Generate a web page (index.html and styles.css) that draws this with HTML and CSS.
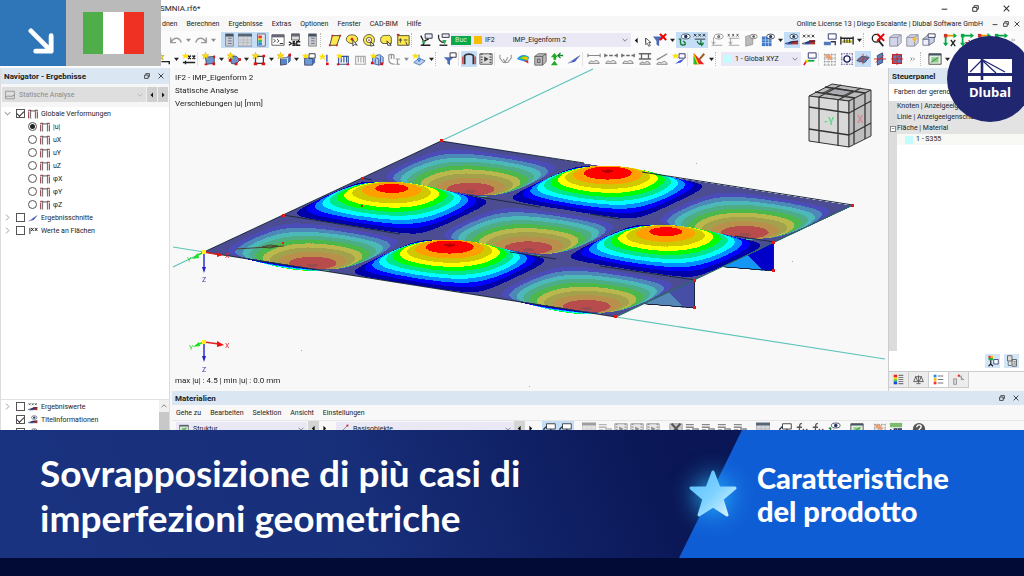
FILE: index.html
```html
<!DOCTYPE html>
<html lang="it">
<head>
<meta charset="utf-8">
<title>Sovrapposizione di più casi di imperfezioni geometriche</title>
<link rel="stylesheet" href="styles.css">
</head>
<body>
<svg class="defs" aria-hidden="true">
  <symbol id="undo" viewBox="0 0 16 16"><path d="M2 5v6h6M2.500 10.500C5 5 12 4 14 11" fill="none" stroke="#9a9a9a" stroke-width="1.600"/></symbol>
  <symbol id="redo" viewBox="0 0 16 16"><path d="M14 5v6H8M13.500 10.500C11 5 4 4 2 11" fill="none" stroke="#9a9a9a" stroke-width="1.600"/></symbol>
  <symbol id="caret" viewBox="0 0 8 16"><path d="M0 6h8l-4 5z" fill="#222"/></symbol>
  <symbol id="chev" viewBox="0 0 10 10"><path d="M1 3l4 4 4-4" fill="none" stroke="#666" stroke-width="1.300"/></symbol>
  <symbol id="more" viewBox="0 0 12 16"><path d="M1 5l3 3-3 3M6 5l3 3-3 3" fill="none" stroke="#555" stroke-width="1.300"/></symbol>
  <symbol id="left" viewBox="0 0 8 16"><path d="M6 3v10L1 8z" fill="#111"/></symbol>
  <symbol id="right" viewBox="0 0 8 16"><path d="M2 3v10l5-5z" fill="#111"/></symbol>
  <symbol id="panel" viewBox="0 0 16 16"><path d="M4 1h9v14H4z" fill="#c9ccd0" stroke="#888"/><path d="M4 1h9v3H4z" fill="#456"/><path d="M7 6h4M7 9h4M7 12h4" stroke="#668"/></symbol>
  <symbol id="table" viewBox="0 0 16 16"><path d="M0 1h16v14H0z" fill="#d4d6da" stroke="#889"/><path d="M0 1h16v3H0z" fill="#567"/><path d="M1 8h14M1 11h14M6 5v9M10.500 5v9" stroke="#b4bac2"/></symbol>
  <symbol id="colors" viewBox="0 0 16 16"><path d="M4 1h9v14H4z" fill="#dfe4ea" stroke="#667"/><path d="M5 3h4v3H5z" fill="#e33"/><path d="M5 6h4v2H5z" fill="#ec0"/><path d="M5 8h4v3H5z" fill="#3b5"/><path d="M5 11h4v3H5z" fill="#28e"/></symbol>
  <symbol id="console" viewBox="0 0 16 16"><path d="M1 2h14v12H1z" fill="#fff" stroke="#555"/><path d="M1 2h14v3H1z" fill="#667"/><path d="M3 7l2 2-2 2M7 7l2 2-2 2M10 12h4" fill="none" stroke="#222"/></symbol>
  <symbol id="script" viewBox="0 0 16 16"><path d="M4 1h9v7H4z" fill="#ddd" stroke="#555"/><path d="M4 1h9v3H4z" fill="#667"/><path d="M1 10l3 2-3 2M8 10H6v2h2v2H5M14 10h-4v4h4M12 8v2" fill="none" stroke="#222" stroke-width="1.500"/></symbol>
  <symbol id="poly" viewBox="0 0 16 16"><path d="M5 3h9l-4 11H2z" fill="#ffe94a" stroke="#333"/><path d="M4 2h2v2H4zM13 2h2v2h-2zM1 13h2v2H1zM9 13h2v2H9z" fill="#c22"/></symbol>
  <symbol id="ellip" viewBox="0 0 16 16"><ellipse cx="8" cy="7" rx="6.500" ry="5" fill="#ffe94a" stroke="#554" /><circle cx="8" cy="7" r="1.500" fill="#c22"/><path d="M9 8v7l2-2 3 1z" fill="#fff" stroke="#333"/></symbol>
  <symbol id="ring" viewBox="0 0 16 16"><circle cx="8" cy="8" r="6.300" fill="#ffe94a" stroke="#554"/><circle cx="8" cy="8" r="3" fill="#fff" stroke="#554"/><circle cx="8" cy="8" r="1" fill="#c22"/><path d="M10 10v5l4-1z" fill="#fff" stroke="#333"/></symbol>
  <symbol id="lasso" viewBox="0 0 16 16"><path d="M2 9c-1-5 3-7 7-6 3-1 5 0 5 4v5H6c-2 0-4-1-4-3z" fill="#ffe94a" stroke="#443"/><path d="M9 9l5 5h-4z" fill="#fff" stroke="#333"/></symbol>
  <symbol id="boxsel" viewBox="0 0 16 16"><path d="M2 3h13v11H2z" fill="#ffe94a" stroke="#443"/><path d="M5 6v5M3 8h4M9 8h4M11 10l2 4" stroke="#333"/><path d="M1 1h3v2H1z" fill="#c22"/></symbol>
  <symbol id="load" viewBox="0 0 16 16"><path d="M7 1h8v5H7z" fill="#e8edf6" stroke="#223"/><path d="M2 3l3 6M5 9v5M11 7l-5 2M2 14h11" stroke="#222" stroke-width="1.500"/><path d="M3 9h5l-2 4z" fill="#3a5"/></symbol>
  <symbol id="load2" viewBox="0 0 16 16"><path d="M7 1h8v4H7z" fill="#e8edf6" stroke="#223"/><path d="M3 2c-1 5 2 9 7 9M4 14h9" fill="none" stroke="#333" stroke-width="1.500"/><path d="M7 8h5l-2 5z" fill="#3a5"/></symbol>
  <symbol id="filterx" viewBox="0 0 16 16"><path d="M0 4h11l-4 5v6l-3-2V9z" fill="#4a6cb8"/><path d="M8 1l7 7M15 1L8 8" stroke="#e00" stroke-width="2.400"/></symbol>
  <symbol id="filter" viewBox="0 0 16 16"><path d="M1 6h11L8 10v5l-3-2v-3z" fill="#4a6cb8"/><path d="M8 1h7v5H8z" fill="#fff" stroke="#223"/></symbol>
  <symbol id="eyeload" viewBox="0 0 16 16"><ellipse cx="10" cy="4" rx="5" ry="2.800" fill="#fff" stroke="#345"/><circle cx="10" cy="4" r="2" fill="#236"/><path d="M2 7h3M4 7v4c0 3 4 4 6 1M7 9l3 3" fill="none" stroke="#173" stroke-width="1.600"/></symbol>
  <symbol id="xxx" viewBox="0 0 16 16"><path d="M1 1l3 3M4 1L1 4M6 1l3 3M9 1L6 4M11 1l3 3M14 1l-3 3M2 7h12" stroke="#222"/><path d="M5 9c0 4 4 5 7 3M9 8v5M8 11l2 3 2-3" fill="none" stroke="#173" stroke-width="1.500"/></symbol>
  <symbol id="eyegray" viewBox="0 0 16 16"><ellipse cx="10" cy="4" rx="5" ry="2.800" fill="#fff" stroke="#888"/><circle cx="10" cy="4" r="1.800" fill="#777"/><path d="M4 5v8M2 10l2 3 2-3M2 14h12" fill="none" stroke="#999"/></symbol>
  <symbol id="xgray" viewBox="0 0 16 16"><path d="M1 1l2 3M3 1L1 4M6 1l2 3M8 1L6 4M11 1l2 3M13 1l-2 3" stroke="#555"/><path d="M4 6v7M2 10l2 3 2-3M2 14h12M2 6h12" fill="none" stroke="#999"/></symbol>
  <symbol id="boxeye" viewBox="0 0 16 16"><path d="M2 4l8-2v11l-8 2z" fill="#bbb" stroke="#999"/><ellipse cx="11" cy="4" rx="4" ry="2.500" fill="#fff" stroke="#777"/><circle cx="11" cy="4" r="1.500" fill="#555"/></symbol>
  <symbol id="grideye" viewBox="0 0 16 16"><path d="M1 4h11v11H1z" fill="#3f78c4"/><path d="M1 8h11M1 11h11M5 4v11M8.500 4v11" stroke="#cfe0f6" stroke-width=".7"/><ellipse cx="11" cy="4" rx="4.500" ry="2.800" fill="#fff" stroke="#345"/><circle cx="11" cy="4" r="1.800" fill="#236"/></symbol>
  <symbol id="flageye" viewBox="0 0 16 16"><ellipse cx="10" cy="4" rx="4.500" ry="2.800" fill="#fff" stroke="#345"/><circle cx="10" cy="4" r="1.800" fill="#236"/><path d="M8 9h7v4H8z" fill="#a33"/><path d="M0 13c4 0 4-4 8-4v4z" fill="#35a"/><path d="M0 12L15 9" stroke="#224"/></symbol>
  <symbol id="flagx" viewBox="0 0 16 16"><path d="M1 2l3 3M4 2L1 5M6 2l3 3M9 2L6 5M11 2l3 3M14 2l-3 3" stroke="#222"/><path d="M8 8h7v5H8z" fill="#a33"/><path d="M0 13c4 0 4-4 8-4v4z" fill="#35a"/><path d="M0 12L15 9" stroke="#224"/></symbol>
  <symbol id="wincurve" viewBox="0 0 16 16"><path d="M6 1h9v6H6z" fill="#fff" stroke="#226"/><path d="M1 10h8v4H1z" fill="#57b"/><path d="M9 10h5v4" fill="none" stroke="#335" stroke-width="1.500"/></symbol>
  <symbol id="winlink" viewBox="0 0 16 16"><path d="M4 2h10v6H4z" fill="#fff" stroke="#333"/><path d="M4 5l-3 3v6M9 8v4h5" fill="none" stroke="#235" stroke-width="1.500"/></symbol>
  <symbol id="ruler" viewBox="0 0 16 16"><path d="M1 4v9M15 4v9M1 6h14M3 10h10" stroke="#222" stroke-width="1.500"/><path d="M3 8h10v3H3z" fill="#cc3"/><path d="M5 6v5M8 6v5M11 6v5" stroke="#222"/></symbol>
  <symbol id="zoomx" viewBox="0 0 16 16"><circle cx="6" cy="6" r="4.500" fill="#fff" stroke="#222" stroke-width="1.500"/><path d="M9 9l5 6" stroke="#222" stroke-width="2"/><path d="M7 1l8 8M15 1L7 9" stroke="#e00" stroke-width="2.400"/></symbol>
  <symbol id="cube" viewBox="0 0 16 16"><path d="M2 5l4-3h9v9l-4 4H2zM2 5h9v10M11 5l4-3" fill="#d3d6ea" stroke="#889"/></symbol>
  <symbol id="cubey" viewBox="0 0 16 16"><path d="M2 5l4-3h9v9l-4 4H2zM2 5h9v10M11 5l4-3" fill="#d3d6ea" stroke="#889"/><path d="M12 3L8 8h3l-2 5 5-7h-3z" fill="#fb2"/></symbol>
  <symbol id="cubes" viewBox="0 0 16 16"><path d="M1 7h7v7H1z" fill="#eef" stroke="#778"/><path d="M1 7l5-4h8v7l-6 4V7z" fill="#c4d0ee" stroke="#667"/><path d="M7 1h8v4H7z" fill="#fff" stroke="#335"/></symbol>
  <symbol id="axes" viewBox="0 0 16 16"><path d="M3 3v11" stroke="#0a4" stroke-width="2"/><path d="M3 3h11" stroke="#e90" stroke-width="2"/><path d="M1 1h4v4H1z" fill="#c33"/><path d="M0 11h6l-3 4zM12 0v6l4-3z" fill="#0a4"/><path d="M9 8l5 7M14 8l-5 7" stroke="#222" stroke-width="1.500"/></symbol>
  <symbol id="axes2" viewBox="0 0 16 16"><path d="M3 3v11M3 3h11" stroke="#0a4" stroke-width="2"/><path d="M1 1h4v4H1z" fill="#0a4"/><path d="M0 11h6l-3 4zM12 0v6l4-3z" fill="#0a4"/><path d="M6 11h3M10 8l4 7M14 8l-4 7" stroke="#c33" stroke-width="1.500"/></symbol>
  <symbol id="line" viewBox="0 0 16 16"><path d="M4 1l1 3 3 0-2 2 1 3-3-2-3 1 1-3-2-2h3z" fill="#ffe000" stroke="#997a00" stroke-width=".5"/><path d="M5 11h9v3" fill="none" stroke="#222" stroke-width="1.600"/></symbol>
  <symbol id="starxx" viewBox="0 0 16 16"><path d="M7 4l3 4M10 4L7 8M12 4l3 4M15 4l-3 4M1 12h14M4 10v4" stroke="#222" stroke-width="1.500"/><path d="M4 0l1 3h3L6 5l1 3-3-2-3 2 1-3-2-2h3z" fill="#ffe000"/></symbol>
  <symbol id="newmember" viewBox="0 0 16 16"><path d="M4 6l10-1v8l-9 1z" fill="#6c95cf" stroke="#446"/><path d="M13 4h2v3h-2zM3 13h3v2H3zM12 12h3v3h-3z" fill="#d11"/><path d="M4 0l1 3h3L6 5l1 3-3-2-3 2 1-3-2-2h3z" fill="#ffe000" stroke="#b90" stroke-width=".4"/></symbol>
  <symbol id="newsurf" viewBox="0 0 16 16"><path d="M4 7c2-3 6-3 8-1l3 3-5 5-5-1z" fill="#6c95cf" stroke="#446"/><path d="M2 8h3v3H2zM9 12h3v3H9zM13 7h3v3h-3z" fill="#d11"/><path d="M4 0l1 3h3L6 5l1 3-3-2-3 2 1-3-2-2h3z" fill="#ffe000" stroke="#b90" stroke-width=".4"/></symbol>
  <symbol id="newopen" viewBox="0 0 16 16"><path d="M4 5h9v8H4z" fill="#fff" stroke="#345" stroke-width="1.500"/><path d="M2 12h4v3H2zM11 12h4v3h-4zM12 3h3v3h-3z" fill="#d11"/><path d="M4 0l1 3h3L6 5l1 3-3-2-3 2 1-3-2-2h3z" fill="#ffe000" stroke="#b90" stroke-width=".4"/></symbol>
  <symbol id="newsolid" viewBox="0 0 16 16"><path d="M4 7l8-1 3-4v8l-4 4-7 1z" fill="#5b86c5" stroke="#446"/><path d="M4 7h8v7" fill="none" stroke="#def"/><path d="M13 2h3v3h-3z" fill="#d11"/><path d="M4 0l1 3h3L6 5l1 3-3-2-3 2 1-3-2-2h3z" fill="#ffe000" stroke="#b90" stroke-width=".4"/></symbol>
  <symbol id="newbox" viewBox="0 0 16 16"><path d="M3 7h9v8H3z" fill="#6b9ad8" stroke="#446"/><path d="M8 2h7v5H8z" fill="#fff" stroke="#223"/><path d="M12 7h3v5l-3 3z" fill="#4a74b4"/><path d="M4 1l1 2h3L6 5l1 3-3-2-3 2 1-3-2-2h3z" fill="#ffe000"/></symbol>
  <symbol id="node" viewBox="0 0 16 16"><path d="M9 3v8" stroke="#35c" stroke-width="1.600"/><path d="M8 12h3v3H8z" fill="#d11"/><path d="M4 1l1 3h3L6 6l1 3-3-2-3 2 1-3-2-2h3z" fill="#ffe000"/></symbol>
  <symbol id="frame" viewBox="0 0 16 16"><path d="M3 14V5h11v9M6 5v7M9 5v7M12 5v7M2 14h13" fill="none" stroke="#359" stroke-width="1.300"/><path d="M1 13h3v2H1zM12 13h3v2h-3z" fill="#d11"/><path d="M4 1l1 2h3L6 5l1 3-3-2-3 2 1-3-2-2h3z" fill="#ffe000"/></symbol>
  <symbol id="framegray" viewBox="0 0 16 16"><path d="M3 14V5h11v9M6 5v7M9 5v7M12 5v7M2 14h13" fill="none" stroke="#aaa" stroke-width="1.300"/></symbol>
  <symbol id="framebox" viewBox="0 0 16 16"><path d="M3 5l8-2 4 3v7l-5 2-7-2zM3 5l7 3v7M6 5v8M12 5v9" fill="#b9cdf0" stroke="#359"/><path d="M1 11h3v3H1zM12 12h3v3h-3z" fill="#d11"/><path d="M4 0l1 3h3L6 5l1 3-3-2-3 2 1-3-2-2h3z" fill="#ffe000"/></symbol>
  <symbol id="spring" viewBox="0 0 16 16"><path d="M2 3v5c0 4 3 6 7 6M5 2v6M8 3v5M2 3h6M10 8h5M12 8v6M10 14h5" fill="none" stroke="#999" stroke-width="1.400"/></symbol>
  <symbol id="plane" viewBox="0 0 16 16"><path d="M2 12l6-5 7 3-6 5z" fill="#b9cdf0" stroke="#57a"/><path d="M8 3v7M6 8l2 3 2-3" fill="none" stroke="#27c"/><path d="M4 1l1 2h3L6 5l1 3-3-2-3 2 1-3-2-2h3z" fill="#ffe000"/></symbol>
  <symbol id="portal" viewBox="0 0 16 16"><path d="M3 14V4c2-2 8-2 10 0v10" fill="none" stroke="#333" stroke-width="2"/><path d="M1 14V5M15 14V5" stroke="#c22" stroke-width="1.300"/></symbol>
  <symbol id="film" viewBox="0 0 16 16"><path d="M1 2h14v12H1z" fill="#ddd" stroke="#555"/><path d="M3 2v12M13 2v12" stroke="#555" stroke-dasharray="1.500 1.500" stroke-width="2"/><path d="M6 5v6l5-3z" fill="#444"/></symbol>
  <symbol id="vgray" viewBox="0 0 16 16"><path d="M1 3v4l4 5h5l4-5V3M5 8l2 4 3-6" fill="none" stroke="#999" stroke-width="1.300"/></symbol>
  <symbol id="rainbow" viewBox="0 0 16 16"><path d="M1 8c4-5 9-6 14-2l-2 6c-4-2-8-2-12-4z" fill="#1a8cf0"/><path d="M3 8c4-4 8-4 11-2l-1 4c-4-2-7-1-10-2z" fill="#3d3"/><path d="M6 7c3-2 6-2 8 0l-1 2z" fill="#fb0"/><path d="M9 10h5v3z" fill="#e22"/></symbol>
  <symbol id="graybox" viewBox="0 0 16 16"><path d="M2 5l4-3h9v9l-4 4H2z" fill="#bbb" stroke="#666"/><path d="M2 5h9v10M11 5l4-3M5 8h3v4H5z" fill="none" stroke="#555"/></symbol>
  <symbol id="react" viewBox="0 0 16 16"><path d="M4 9V3h3v6" fill="#2a2"/><path d="M1 6l4-5 4 5zM1 15l4-5 4 5z" fill="#2a2"/><path d="M15 4H9M12 1L9 4l3 3" fill="none" stroke="#183" stroke-width="1.500"/></symbol>
  <symbol id="blade" viewBox="0 0 16 16"><path d="M1 13c5-1 5-5 14-9L9 11z" fill="#3d55d8"/><path d="M1 13L15 4" stroke="#88a"/></symbol>
  <symbol id="dim" viewBox="0 0 16 16"><path d="M1 4h14M1 2v4M15 2v4" stroke="#888" stroke-width="1.300"/><path d="M2 13c2-5 5-1 6-2s4-3 6 2z" fill="#eee" stroke="#777"/></symbol>
  <symbol id="dimx" viewBox="0 0 16 16"><path d="M1 4h3M6 4h4M12 4h3M1 2v4M15 2v4" stroke="#666" stroke-width="1.500"/><path d="M2 13c2-5 5-1 6-2s4-3 6 2z" fill="#eee" stroke="#777"/></symbol>
  <symbol id="dimt" viewBox="0 0 16 16"><path d="M1 2h14M4 2v6M12 2v6M1 8h14" stroke="#666" stroke-width="1.500"/><path d="M2 14c2-5 5-1 6-2s4-3 6 2z" fill="#ddd" stroke="#777"/></symbol>
  <symbol id="dimd" viewBox="0 0 16 16"><path d="M2 9l12-7" stroke="#888" stroke-width="1.500"/><path d="M2 14c2-4 5-1 6-2s4-3 6 2z" fill="#eee" stroke="#777"/></symbol>
  <symbol id="newres" viewBox="0 0 16 16"><path d="M8 2h7v5H8z" fill="#fff" stroke="#226"/><path d="M1 14c5 0 5-5 13-6l-4 4z" fill="#3d55d8"/><path d="M4 1l1 2h3L6 5l1 3-3-2-3 2 1-3-2-2h3z" fill="#ffe000"/></symbol>
  <symbol id="pencilmap" viewBox="0 0 16 16"><path d="M2 1v13h12z" fill="#e22"/><path d="M2 1l6 13H2z" fill="#fc0"/><path d="M2 4l4 10H2z" fill="#2b3"/><path d="M8 9l6-7" stroke="#963" stroke-width="2.400"/></symbol>
  <symbol id="cs" viewBox="0 0 16 16"><path d="M6 1h9v6H6z" fill="#fff" stroke="#226"/><path d="M4 10h9" stroke="#0a4" stroke-width="2"/><path d="M4 10l-3 5" stroke="#d22" stroke-width="2"/><path d="M3 9h3v3H3z" fill="#fc0"/></symbol>
  <symbol id="snap" viewBox="0 0 16 16"><path d="M2 2v13M6 2v13M10 2v13M14 2v13M1 3h14M1 7h14M1 11h14M1 15h14" stroke="#777" stroke-dasharray="1 1"/><path d="M2 2l7 2 2 4-3 1-5-3z" fill="#eaa070"/></symbol>
  <symbol id="snap2" viewBox="0 0 16 16"><path d="M2 2v13M14 2v13M1 2h14M1 14h14M8 1v15M1 8h14" stroke="#669" stroke-dasharray="2 1"/><circle cx="8" cy="8" r="3.500" fill="#fff" stroke="#226" stroke-width="1.500"/></symbol>
  <symbol id="wp" viewBox="0 0 16 16"><path d="M1 10l5-5 9 1-5 6z" fill="#5b80c0" stroke="#346"/><path d="M8 2v12M2 8h12M4 12l8-8" stroke="#a44"/></symbol>
  <symbol id="wp2" viewBox="0 0 16 16"><path d="M5 4l6-3v11l-6 3z" fill="#5b80c0" stroke="#346"/><path d="M1 8h14M3 12l9-8" stroke="#c22"/></symbol>
  <symbol id="wp3" viewBox="0 0 16 16"><path d="M3 3h10v10H3z" fill="#5b80c0" stroke="#c22" stroke-width="1.500"/><path d="M1 8h14M8 1v14M4 12l8-8" stroke="#c22"/></symbol>
  <symbol id="greenwin" viewBox="0 0 16 16"><path d="M1 2h14v12H1z" fill="#e6efe6" stroke="#444"/><path d="M1 2h14v2H1z" fill="#456"/><path d="M4 6h8v6H4z" fill="#8c8"/><path d="M3 12l9-6" stroke="#383"/></symbol>
  <symbol id="disp" viewBox="0 0 16 16"><path d="M4 15V3h8v12" fill="none" stroke="#777" stroke-width="2"/><path d="M1 15V5M1 4V2h4M11 2h4v2M15 15V5" fill="none" stroke="#8a2a34" stroke-width="1.500"/></symbol>
  <symbol id="values" viewBox="0 0 16 16"><path d="M5 3l4 5M9 3L5 8M11 3l4 5M15 3l-4 5M3 3v10" stroke="#222" stroke-width="1.500"/></symbol>
  <symbol id="restore" viewBox="0 0 10 10"><path d="M3 3V1h6v5H7M1 3.500h6V9H1z" fill="none" stroke="#333" stroke-width="1.400"/></symbol>
  <symbol id="close" viewBox="0 0 10 10"><path d="M1 1l8 8M9 1L1 9" stroke="#333" stroke-width="1.500"/></symbol>
  <symbol id="min" viewBox="0 0 10 10"><path d="M1 6h8" stroke="#333" stroke-width="1.500"/></symbol>
  <symbol id="scales" viewBox="0 0 16 16"><path d="M8 2v11M3 4h10M4 4l-3 7h6zM12 4l-3 7h6zM5 14h6" fill="none" stroke="#555" stroke-width="1.300"/></symbol>
  <symbol id="list" viewBox="0 0 16 16"><path d="M1 1h4v4H1z" fill="#28e"/><path d="M1 6h4v4H1z" fill="#fb0"/><path d="M1 11h4v4H1z" fill="#e33"/><path d="M7 3h8M7 8h8M7 13h8" stroke="#777" stroke-width="1.500"/></symbol>
  <symbol id="scale" viewBox="0 0 16 16"><path d="M1 1h5v4H1z" fill="#e22"/><path d="M1 5h5v3H1z" fill="#fc0"/><path d="M1 8h5v3H1z" fill="#3c4"/><path d="M1 11h5v4H1z" fill="#24d"/><path d="M8 2h7M8 5h7M8 8h7M8 11h7M8 14h7" stroke="#777" stroke-width="1.500"/></symbol>
  <symbol id="factor" viewBox="0 0 16 16"><path d="M1 7h4v8H1z" fill="#ddd" stroke="#777"/><path d="M7 1h3v3H7z" fill="#d22"/><path d="M10 3l5 5M12 2v6h4" fill="none" stroke="#777"/></symbol>
  <symbol id="person" viewBox="0 0 16 16"><path d="M2 1h3v3H2z" fill="#e22"/><path d="M5 1h3v3H5z" fill="#fb0"/><path d="M2 4h6v3H2z" fill="#2a4"/><path d="M5 7v5l-3 3M5 12l3 3" stroke="#222" stroke-width="1.600" fill="none"/><path d="M9 6h6v6H9z" fill="#fff" stroke="#226"/></symbol>
  <symbol id="copy" viewBox="0 0 16 16"><path d="M2 1h6v7H2zM8 6h6v9H8z" fill="#ddd" stroke="#666" stroke-width="1.300"/><path d="M3 9v5h4M10 9h3M10 12h3" fill="none" stroke="#555"/></symbol>
  <symbol id="help" viewBox="0 0 16 16"><circle cx="8" cy="8" r="7" fill="#555"/><path d="M5.500 6c0-4 5-3 5-.500 0 2-2.500 2-2.500 4M8 11v2" fill="none" stroke="#fff" stroke-width="1.600"/></symbol>
  <symbol id="calc" viewBox="0 0 16 16"><path d="M1 1h14v5H1z" fill="#7cbb70"/><path d="M2 8v6M6 8h3v6H6zM11 8h3v6h-3z" fill="none" stroke="#235" stroke-width="1.500"/></symbol>
  <symbol id="fx" viewBox="0 0 16 16"><path d="M8 2c-3-1-3 2-3 12M2 6h6M9 8l5 6M14 8l-5 6" fill="none" stroke="#555" stroke-width="1.500"/></symbol>
  <symbol id="rows" viewBox="0 0 16 16"><path d="M1 3h9M1 6h9M1 9h5M8 8h7v4M12 12l3 2" fill="none" stroke="#888" stroke-width="1.600"/></symbol>
  <symbol id="delx" viewBox="0 0 16 16"><path d="M1 2h14v13H1z" fill="#ccc" stroke="#999"/><path d="M3 2l10 11M13 2L3 13" stroke="#555" stroke-width="2.400"/></symbol>
</svg>

<main class="stage">
  <section class="app">
    <header class="titlebar">
      <span class="file">SMNIA.rf6*</span>
      <div class="win-buttons">
        <button aria-label="Minimieren"><svg><use href="#min"/></svg></button>
        <button aria-label="Wiederherstellen"><svg><use href="#restore"/></svg></button>
        <button aria-label="Schließen"><svg><use href="#close"/></svg></button>
      </div>
    </header>
    <nav class="menubar">
      <a href="#">dnen</a><a href="#">Berechnen</a><a href="#">Ergebnisse</a><a href="#">Extras</a><a href="#">Optionen</a><a href="#">Fenster</a><a href="#">CAD-BIM</a><a href="#">Hilfe</a>
      <span class="license">Online License 13 | Diego Escalante | Dlubal Software GmbH</span>
      <div class="mini"><svg><use href="#min"/></svg><svg><use href="#restore"/></svg><svg><use href="#close"/></svg></div>
    </nav>

    <div class="toolbar first">
      <button aria-label="Rückgängig"><svg><use href="#undo"/></svg></button><button class="drop dim" aria-label="Liste"><svg><use href="#caret"/></svg></button>
      <button aria-label="Wiederholen"><svg><use href="#redo"/></svg></button><button class="drop dim" aria-label="Liste"><svg><use href="#caret"/></svg></button>
      <i class="sep"></i>
      <div class="on"><button aria-label="Navigator"><svg><use href="#panel"/></svg></button><button aria-label="Tabellen"><svg><use href="#table"/></svg></button><button aria-label="Panel"><svg><use href="#colors"/></svg></button></div>
      <button aria-label="Konsole"><svg><use href="#console"/></svg></button><button aria-label="Skript"><svg><use href="#script"/></svg></button><button aria-label="Manager"><svg><use href="#panel"/></svg></button>
      <i class="sep dots"></i>
      <button aria-label="Auswahl 1"><svg><use href="#poly"/></svg></button><button aria-label="Auswahl 2"><svg><use href="#ellip"/></svg></button><button aria-label="Auswahl 3"><svg><use href="#ring"/></svg></button><button aria-label="Auswahl 4"><svg><use href="#lasso"/></svg></button><button aria-label="Auswahl 5"><svg><use href="#boxsel"/></svg></button>
      <i class="sep dots"></i>
      <button aria-label="Lastfälle"><svg><use href="#load"/></svg></button><button aria-label="Lasten"><svg><use href="#load2"/></svg></button>
      <div class="combo case"><b class="tag">Buc</b><i class="swatch"></i><label for="case">IF2</label><select id="case"><option>IMP_Eigenform 2</option></select><svg class="chev"><use href="#chev"/></svg></div>
      <button class="step" aria-label="Zurück"><svg><use href="#left"/></svg></button><button class="step" aria-label="Weiter"><svg><use href="#right"/></svg><svg class="cursor" viewBox="0 0 8 12"><path d="M1 0v9l2-2 2 4 2-1-2-4h3z" fill="#fff" stroke="#333"/></svg></button>
      <button aria-label="Filter aus"><svg><use href="#filterx"/></svg></button><button class="drop" aria-label="Liste"><svg><use href="#caret"/></svg></button>
      <div class="on"><button aria-label="Lasten zeigen"><svg><use href="#eyeload"/></svg></button><button aria-label="Lastwerte"><svg><use href="#xxx"/></svg></button></div>
      <button aria-label="Lager zeigen"><svg><use href="#eyegray"/></svg></button><button aria-label="Lagerwerte"><svg><use href="#xgray"/></svg></button><button aria-label="Objekte"><svg><use href="#boxeye"/></svg></button><button aria-label="Netz"><svg><use href="#grideye"/></svg></button><button class="drop" aria-label="Liste"><svg><use href="#caret"/></svg></button>
      <div class="on"><button aria-label="Ergebnisse zeigen"><svg><use href="#flageye"/></svg></button></div>
      <button aria-label="Ergebniswerte"><svg><use href="#flagx"/></svg></button>
      <i class="sep"></i>
      <button aria-label="Verlauf"><svg><use href="#wincurve"/></svg></button><button aria-label="Bemaßung"><svg><use href="#ruler"/></svg></button><button class="drop" aria-label="Liste"><svg><use href="#caret"/></svg></button>
      <i class="sep dots"></i>
      <button aria-label="Zoom"><svg><use href="#zoomx"/></svg></button><button aria-label="Ansicht"><svg><use href="#cube"/></svg></button><button aria-label="Schnellansicht"><svg><use href="#cubey"/></svg></button><button aria-label="Körper"><svg><use href="#cubes"/></svg></button>
      <i class="sep"></i>
      <button aria-label="In X"><svg><use href="#axes"/></svg></button><button aria-label="In -X"><svg><use href="#axes2"/></svg></button><button aria-label="In Y"><svg><use href="#axes"/></svg></button><button aria-label="In Z"><svg><use href="#axes2"/></svg></button><button class="drop" aria-label="Mehr"><svg><use href="#more"/></svg></button>
    </div>

    <div class="toolbar second">
      <button aria-label="Neue Linie"><svg><use href="#line"/></svg></button><button class="drop" aria-label="Liste"><svg><use href="#caret"/></svg></button><button aria-label="Bemaßung neu"><svg><use href="#starxx"/></svg></button>
      <i class="sep thin"></i>
      <button aria-label="Neuer Stab"><svg><use href="#newmember"/></svg></button><button class="drop" aria-label="Liste"><svg><use href="#caret"/></svg></button><button aria-label="Neue Fläche"><svg><use href="#newsurf"/></svg></button><button class="drop" aria-label="Liste"><svg><use href="#caret"/></svg></button><button aria-label="Neue Öffnung"><svg><use href="#newopen"/></svg></button><button class="drop" aria-label="Liste"><svg><use href="#caret"/></svg></button><button aria-label="Neuer Körper"><svg><use href="#newsolid"/></svg></button><button class="drop" aria-label="Liste"><svg><use href="#caret"/></svg></button><button aria-label="Neuer Block"><svg><use href="#newbox"/></svg></button>
      <button aria-label="Knotenlast"><svg><use href="#node"/></svg></button><button aria-label="Stablast"><svg><use href="#frame"/></svg></button><button aria-label="Linienlast"><svg><use href="#framegray"/></svg></button><button aria-label="Flächenlast"><svg><use href="#framebox"/></svg></button><button aria-label="Feder"><svg><use href="#spring"/></svg></button><button class="drop dim" aria-label="Liste"><svg><use href="#caret"/></svg></button><button aria-label="Freie Last"><svg><use href="#plane"/></svg></button><button class="drop" aria-label="Liste"><svg><use href="#caret"/></svg></button>
      <i class="sep dots"></i>
      <button aria-label="Filter"><svg><use href="#filter"/></svg></button>
      <i class="sep thin"></i>
      <div class="on"><button aria-label="Verformung"><svg><use href="#portal"/></svg></button></div><button aria-label="Animation"><svg><use href="#film"/></svg></button>
      <i class="sep thin"></i>
      <button aria-label="Stäbe"><svg><use href="#vgray"/></svg></button><button aria-label="Flächen"><svg><use href="#rainbow"/></svg></button><button aria-label="Volumen"><svg><use href="#graybox"/></svg></button><button aria-label="Reaktionen"><svg><use href="#react"/></svg></button><button aria-label="Schnitte"><svg><use href="#blade"/></svg></button>
      <i class="sep thin"></i>
      <button aria-label="Maß 1"><svg><use href="#dim"/></svg></button><button aria-label="Maß 2"><svg><use href="#dimx"/></svg></button><button aria-label="Maß 3"><svg><use href="#dimx"/></svg></button><button aria-label="Maß 4"><svg><use href="#dimt"/></svg></button><button aria-label="Maß 5"><svg><use href="#dimd"/></svg></button><button aria-label="Neues Ergebnis"><svg><use href="#newres"/></svg></button>
      <i class="sep thin"></i>
      <button aria-label="Farben"><svg><use href="#pencilmap"/></svg></button><button class="drop" aria-label="Liste"><svg><use href="#caret"/></svg></button>
      <i class="sep dots"></i>
      <div class="combo axes"><i class="swatch pale"></i><select aria-label="Koordinatensystem"><option>1 - Global XYZ</option></select><svg class="chev"><use href="#chev"/></svg></div>
      <button aria-label="Koordinaten"><svg><use href="#cs"/></svg></button>
      <i class="sep thin"></i>
      <button aria-label="Raster"><svg><use href="#snap"/></svg></button><button aria-label="Fang"><svg><use href="#snap2"/></svg></button><div class="on"><button aria-label="Ebene XY"><svg><use href="#wp"/></svg></button></div><button aria-label="Ebene YZ"><svg><use href="#wp2"/></svg></button><button aria-label="Ebene XZ"><svg><use href="#wp3"/></svg></button><button aria-label="Mehr" class="wide"><svg><use href="#more"/></svg></button>
      <i class="sep dots"></i>
      <button aria-label="Fenster"><svg><use href="#greenwin"/></svg></button><button class="drop" aria-label="Liste"><svg><use href="#caret"/></svg></button><button class="drop" aria-label="Mehr"><svg><use href="#more"/></svg></button>
    </div>

    <div class="workspace">
      <aside class="navigator">
        <header class="panel-head"><h2>Navigator - Ergebnisse</h2><svg><use href="#restore"/></svg><svg><use href="#close"/></svg></header>
        <div class="analysis">
          <div class="combo gray"><svg class="ico" viewBox="0 0 16 16"><path d="M1 2h14v12H1z" fill="none" stroke="#999" stroke-width="1.500"/><path d="M1 12c4-5 8 1 14-4" fill="none" stroke="#888" stroke-width="1.500"/></svg><select disabled aria-label="Analyse"><option>Statische Analyse</option></select><svg class="chev"><use href="#chev"/></svg></div>
          <button aria-label="Zurück"><svg><use href="#left"/></svg></button><button aria-label="Weiter"><svg><use href="#right"/></svg></button>
        </div>
        <div class="tree">
          <div class="node"><svg class="tw"><use href="#chev"/></svg><label><input type="checkbox" checked><svg class="ico"><use href="#disp"/></svg>Globale Verformungen</label></div>
          <div class="node child"><label><input type="radio" name="def" checked><svg class="ico"><use href="#disp"/></svg>|u|</label></div>
          <div class="node child"><label><input type="radio" name="def"><svg class="ico"><use href="#disp"/></svg>uX</label></div>
          <div class="node child"><label><input type="radio" name="def"><svg class="ico"><use href="#disp"/></svg>uY</label></div>
          <div class="node child"><label><input type="radio" name="def"><svg class="ico"><use href="#disp"/></svg>uZ</label></div>
          <div class="node child"><label><input type="radio" name="def"><svg class="ico"><use href="#disp"/></svg>φX</label></div>
          <div class="node child"><label><input type="radio" name="def"><svg class="ico"><use href="#disp"/></svg>φY</label></div>
          <div class="node child"><label><input type="radio" name="def"><svg class="ico"><use href="#disp"/></svg>φZ</label></div>
          <div class="node"><svg class="tw shut"><use href="#chev"/></svg><label><input type="checkbox"><svg class="ico"><use href="#blade"/></svg>Ergebnisschnitte</label></div>
          <div class="node"><svg class="tw shut"><use href="#chev"/></svg><label><input type="checkbox"><svg class="ico"><use href="#values"/></svg>Werte an Flächen</label></div>
        </div>
        <div class="lower">
          <div>
            <div class="node"><svg class="tw shut"><use href="#chev"/></svg><label><input type="checkbox"><svg class="ico"><use href="#flagx"/></svg>Ergebniswerte</label></div>
            <div class="node"><i class="tw"></i><label><input type="checkbox" checked><svg class="ico"><use href="#flageye"/></svg>Titelinformationen</label></div>
            <div class="node"><i class="tw"></i><label><input type="checkbox"><svg class="ico"><use href="#flageye"/></svg></label></div>
          </div>
          <div class="scroll"><svg><use href="#chev"/></svg></div>
        </div>
      </aside>

      <div class="center">
        <div class="upper">
          <section class="viewport">
            <canvas id="shape" width="2154" height="969"></canvas>
            <svg class="scene" viewBox="170 68 718 323">
              <g fill="none" stroke="#5cc4b8" stroke-width="1.200"><path d="M441 141L593 69M616 317L885 359M173 247L204 252M173 267L204 252"/></g>
              <g fill="none" stroke="#1c2c3c" stroke-width="1"><path d="M204 252L441 141L584 163M642 172L853 205"/><path d="M204 252L616 317" /><path d="M616 317L853 205" stroke="#1e6e58"/><path d="M283 215L333 223M333 223L400 234M510 252L556 259M600 266L695 280M362 178L372 180M467 195L540 207M590 214L620 219M735 236L774 242"/><path d="M236 249L284 246M262 247l8-2 8 1-8 2z" stroke="#4c4230"/></g>
              <g fill="#e01818"><path d="M440 139h3v3h-3zM361 177h3v3h-3zM282 214h3v3h-3zM851 204h3v3h-3zM614 315h3v3h-3zM693 279h3v3h-3zM772 241h3v3h-3zM693 306h3v3h-3zM772 269h3v3h-3zM361 205h2v2h-2zM282 242h2v2h-2z"/></g>
              <g fill="#aaa"><path d="M696 163h1v1h-1zM792 261h1v1h-1zM301 350h1v1h-1zM529 386h1v1h-1z"/></g>
              <g stroke-width="1.400"><path d="M204 252l-8 4" stroke="#2d2"/><path d="M198 253l1 5-7 1z" fill="#2d2"/><path d="M204 252l17 3" stroke="#d22"/><path d="M217 252v5l6-2z" fill="#e11"/><path d="M204 252v16" stroke="#22c"/><path d="M202 267h4l-2 6z" fill="#22c"/><path d="M202 250h4v4h-4z" fill="#fe2"/></g>
              <g stroke-width="1.400"><path d="M204 342l-7 3" stroke="#2d2"/><path d="M199 342l1 4-7 1z" fill="#2d2"/><path d="M204 342l15 2" stroke="#d22"/><path d="M217 341v6l7-2z" fill="#e11"/><path d="M204 342v15" stroke="#22c"/><path d="M202 356h4l-2 6z" fill="#22c"/><path d="M202 340h4v4h-4z" fill="#fe2"/></g>
              <g class="axis"><text x="187" y="262" fill="#2d2">Y</text><text x="225" y="258" fill="#e22">X</text><text x="202" y="282" fill="#33b">Z</text><text x="189" y="350" fill="#2d2">Y</text><text x="225" y="348" fill="#e22">X</text><text x="202" y="372" fill="#33b">Z</text></g>
              <g stroke="#333" stroke-width="1" stroke-linejoin="round"><path d="M809 96l23-12 39 6-22 11z" fill="#bcbcbc"/><path d="M809 96l40 5v46l-40-6z" fill="#d9d9d9"/><path d="M849 101l22-11v46l-22 11z" fill="#bebebe"/><path d="M823 93l10-5 20 3-10 5z" fill="#aaaab0"/><path d="M809 107l40 6 22-12M809 129l40 6 22-12M819 97v46M838 100v46M854 98v46M865 93v46M819 97l22-12M838 100l23-12M815 92l40 6M825 87l40 6" fill="none" stroke-width="1.300"/></g>
              <g class="face"><text x="824" y="125" fill="#66d68a">-Y</text><text x="857" y="123" fill="#d98a98">X</text></g>
            </svg>
            <p class="caption">IF2 - IMP_Eigenform 2<br>Statische Analyse<br>Verschiebungen |u| [mm]</p>
            <p class="extrema">max |u| : 4.5 | min |u| : 0.0 mm</p>
          </section>

          <aside class="control">
            <header class="panel-head"><h2>Steuerpanel</h2></header>
            <p class="subject">Farben der gerenderten</p>
            <div class="props">
              <div class="gutter"><i></i><i></i><i class="box">−</i></div>
              <ul>
                <li>Knoten | Anzeigeeigenschaften</li><li>Linie | Anzeigeeigenschaften</li><li>Fläche | Material</li><li class="item"><i class="swatch pale"></i>1 - S355</li>
              </ul>
            </div>
            <div class="actions"><button aria-label="Farbe"><svg><use href="#person"/></svg></button><button aria-label="Kopieren"><svg><use href="#copy"/></svg></button></div>
            <div class="tabs"><button aria-label="Farbskala"><svg><use href="#scale"/></svg></button><button aria-label="Faktoren"><svg><use href="#scales"/></svg></button><button class="active" aria-label="Legende"><svg><use href="#list"/></svg></button><button aria-label="Filter"><svg><use href="#factor"/></svg></button></div>
          </aside>
        </div>

        <section class="materials">
          <header class="panel-head"><h2>Materialien</h2><svg><use href="#restore"/></svg><svg><use href="#close"/></svg></header>
          <nav class="submenu"><a href="#">Gehe zu</a><a href="#">Bearbeiten</a><a href="#">Selektion</a><a href="#">Ansicht</a><a href="#">Einstellungen</a></nav>
          <div class="matbar">
            <div class="combo struct"><svg class="ico"><use href="#greenwin"/></svg><select aria-label="Kategorie"><option>Struktur</option></select><svg class="chev"><use href="#chev"/></svg></div>
            <button class="step off" aria-label="Zurück"><svg><use href="#left"/></svg></button><button class="step" aria-label="Weiter"><svg><use href="#right"/></svg></button>
            <div class="combo basis"><svg class="ico" viewBox="0 0 16 16"><path d="M2 14L13 3" stroke="#888" stroke-width="1.500"/><path d="M12 1h3v3h-3z" fill="#d22"/></svg><select aria-label="Objekte"><option>Basisobjekte</option></select><svg class="chev"><use href="#chev"/></svg></div>
            <button class="step off" aria-label="Zurück"><svg><use href="#left"/></svg></button><button class="step" aria-label="Weiter"><svg><use href="#right"/></svg></button>
            <div class="on"><button aria-label="Synchron"><svg><use href="#winlink"/></svg></button><button aria-label="Auswahl"><svg><use href="#winlink"/></svg></button></div>
            <i class="sep"></i>
            <button class="fade" aria-label="Tabelle"><svg><use href="#table"/></svg></button><button class="fade" aria-label="Zeile"><svg><use href="#rows"/></svg></button><button class="fade" aria-label="Tabelle 2"><svg><use href="#film"/></svg></button><button class="fade" aria-label="Tabelle 3"><svg><use href="#film"/></svg></button><button class="fade" aria-label="Tabelle 4"><svg><use href="#film"/></svg></button>
            <i class="sep"></i>
            <button aria-label="Löschen"><svg><use href="#delx"/></svg></button><button aria-label="Einfügen"><svg><use href="#rows"/></svg></button><button aria-label="Entfernen"><svg><use href="#rows"/></svg></button><button aria-label="Links"><svg><use href="#rows"/></svg></button><button aria-label="Rechts"><svg><use href="#rows"/></svg></button>
            <i class="sep"></i>
            <button aria-label="Layout"><svg><use href="#table"/></svg></button>
            <i class="sep"></i>
            <button aria-label="Flagge"><svg><use href="#winlink"/></svg></button><button aria-label="Formel"><svg><use href="#fx"/></svg></button><button aria-label="Formel löschen"><svg><use href="#fx"/></svg></button><button aria-label="Ansicht"><svg><use href="#eyeload"/></svg></button>
            <i class="sep"></i>
            <button aria-label="Export"><svg><use href="#greenwin"/></svg></button>
            <i class="sep"></i>
            <button aria-label="Bibliothek"><svg><use href="#snap"/></svg></button><button aria-label="Dezimalstellen"><svg><use href="#calc"/></svg></button>
            <i class="sep"></i>
            <button aria-label="Hilfe"><svg><use href="#help"/></svg></button>
          </div>
        </section>
      </div>
    </div>
  </section>

  <div class="badge">
    <div class="arrow"><svg viewBox="0 0 28 28"><path d="M3 3l21 21M24 8v16H8" fill="none" stroke="#fff" stroke-width="5" stroke-linecap="round" stroke-linejoin="round"/></svg></div>
    <div class="flag"><svg viewBox="0 0 61 42"><path d="M0 0h20v42H0z" fill="#4fae49"/><path d="M20 0h21v42H20z" fill="#fff"/><path d="M41 0h20v42H41z" fill="#ef3124"/></svg></div>
  </div>
  <div class="brand">
    <svg viewBox="0 0 44 23"><path d="M0 0h44v14H0zM0 17h44v6H0z" fill="#fff"/><path d="M14 0v21" stroke="#20266f" stroke-width="2.600"/><path d="M14 1L2 13M15 2l13 12M15 1l22 12" stroke="#20266f" stroke-width="1.200"/></svg>
    <span>Dlubal</span>
  </div>
</main>

<section class="banner">
  <h1>Sovrapposizione di più casi di imperfezioni geometriche</h1>
  <div class="category">
    <svg viewBox="0 0 48 48"><defs><linearGradient id="sg" x1="0" y1="0" x2="1" y2="1"><stop offset="0" stop-color="#58bdff"/><stop offset=".5" stop-color="#7dd2ff"/><stop offset="1" stop-color="#e0f6ff"/></linearGradient></defs><path d="M24 2l6 16h16l-13 11 5 16-14-9-14 9 5-16L2 18h16z" fill="url(#sg)" stroke="url(#sg)" stroke-width="3" stroke-linejoin="round"/></svg>
    <p>Caratteristiche<br>del prodotto</p>
  </div>
</section>
<footer class="base"></footer>
<script src="shape.js"></script>
</body>
</html>
```

FILE: styles.css
```css
* { box-sizing: border-box; }
body { margin: 0; height: 100vh; display: flex; flex-direction: column; overflow: hidden; font-family: Roboto, "Open Sans", sans-serif; font-size: 7px; color: #222; background: #020b35; }
h1, h2, p, ul { margin: 0; padding: 0; }
ul { list-style: none; }
a { color: inherit; text-decoration: none; }
button, select, input { font: inherit; color: inherit; margin: 0; padding: 0; border: 0; background: none; }
button { display: flex; align-items: center; justify-content: center; flex: none; }
svg { display: block; flex: none; }
.defs { position: absolute; width: 0; height: 0; }

.stage { position: relative; flex: 1; min-height: 0; overflow: hidden; background: #f8f8f8; }
.app { height: 100%; display: flex; flex-direction: column; }
.titlebar { height: 16px; flex: none; background: #fff; display: flex; justify-content: space-between; align-items: center; padding: 0 14px 0 160px; font-size: 8px; }
.win-buttons { display: flex; gap: 24px; }
.win-buttons svg { width: 7px; height: 7px; }
.menubar { height: 15px; flex: none; display: flex; align-items: center; gap: 9px; padding: 0 4px 0 162px; white-space: nowrap; background: #f7f7f7; }
.license { margin-left: auto; }
.mini { display: flex; gap: 5px; }
.mini svg { width: 6px; height: 6px; }

.toolbar { display: flex; align-items: center; flex: none; height: 19px; overflow: hidden; background: #fbfbfb; }
.toolbar button { width: 17px; height: 16px; }
.toolbar button svg { width: 14px; height: 14px; }
.toolbar .drop { width: 8px; }
.toolbar .drop svg { width: 5px; height: 10px; }
.toolbar .wide { width: 15px; }
.toolbar .wide svg { width: 6px; height: 10px; }
.toolbar .dim svg { opacity: .5; }
.toolbar .step { width: 10px; position: relative; }
.toolbar .step svg { width: 5px; height: 9px; }
.toolbar .step .cursor { position: absolute; left: 4px; top: 6px; width: 6px; height: 9px; }
.toolbar .on button { width: 16px; }
.first { height: 18px; padding-left: 167px; }
.second { padding-left: 155px; }
.on { display: flex; background: #c3def6; }
.sep { width: 4px; height: 14px; flex: none; }
.sep.thin { width: 3px; border-left: 1px solid #e2e2e2; }
.sep.dots { width: 6px; border-left: 1px dotted #bbb; }
.combo { display: flex; align-items: center; height: 14px; background: #e9e8f4; flex: none; }
.combo select { flex: 1; min-width: 0; appearance: none; }
.chev { width: 6px; height: 6px; margin: 0 3px; }
.case { width: 180px; }
.tag { width: 20px; height: 9px; background: #0ba84a; color: #cfeeda; font-weight: 400; line-height: 9px; text-align: center; }
.swatch { width: 8px; height: 8px; background: #f7be08; margin: 0 3px; flex: none; }
.pale { background: #c4fbff; }
.case select { margin-left: 18px; }
.axes { width: 80px; }

.workspace { flex: 1; min-height: 0; display: flex; }
.panel-head { display: flex; align-items: center; gap: 8px; height: 16px; flex: none; padding: 0 5px 0 3px; background: #dae6f2; }
.panel-head h2 { flex: 1; font-size: 8px; font-weight: 700; white-space: nowrap; }
.panel-head svg { width: 6px; height: 6px; }
.navigator { width: 170px; flex: none; display: flex; flex-direction: column; background: #fff; border: solid #dcdcdc; border-width: 0 1px; }
.analysis { display: flex; height: 23px; padding: 3px 1px 5px; background: #f6f6f6; }
.gray { flex: 1; height: 15px; background: #dedede; }
.gray select { color: #8a8a8a; opacity: 1; }
.gray .chev { opacity: .4; }
.ico { width: 10px; height: 10px; margin: 0 4px 0 3px; }
.analysis button { width: 11px; height: 15px; background: #cfcfcf; border-left: 1px solid #eee; }
.analysis button svg { width: 4px; height: 8px; }
.tree { flex: 1; min-height: 0; overflow: hidden; }
.node { display: flex; align-items: center; height: 13px; padding-left: 3px; gap: 5px; }
.node label { display: flex; align-items: center; }
.node .ico { margin: 0 3px; }
.tw { width: 7px; height: 7px; }
.shut { transform: rotate(-90deg); opacity: .7; }
.child { padding-left: 27px; }
input { appearance: none; width: 9px; height: 9px; border: 1px solid #555; background: #fff; display: grid; place-items: center; }
input[type="radio"] { border-radius: 50%; }
input[type="radio"]:checked::after { content: ""; width: 5px; height: 5px; border-radius: 50%; background: #222; }
input[type="checkbox"]:checked::after { content: ""; width: 6px; height: 3px; border: solid #333; border-width: 0 0 1px 1px; transform: rotate(-45deg); margin-bottom: 2px; }
.lower { height: 31px; flex: none; overflow: hidden; display: flex; justify-content: space-between; border-top: 1px solid #e2e2e2; }
.scroll { width: 10px; height: 40px; flex: none; background: linear-gradient(#f0f0f0 12px, #c8c8c8 12px); padding: 3px 2px; }
.scroll svg { width: 6px; height: 6px; transform: rotate(180deg); }

.center { flex: 1; min-width: 0; display: flex; flex-direction: column; }
.upper { flex: 1; min-height: 0; display: flex; }
.viewport { flex: 1; min-width: 0; position: relative; background: #f8f8f8; font-size: 8px; display: flex; flex-direction: column; justify-content: space-between; padding: 3px 5px 4px; }
.viewport canvas, .scene { position: absolute; inset: 0; width: 100%; height: 100%; }
.viewport canvas { object-fit: contain; }
.caption, .extrema { position: relative; line-height: 13px; }
.axis { font-size: 7px; }
.face { font-size: 10px; font-weight: 700; }
.control { width: 136px; flex: none; display: flex; flex-direction: column; background: #fff; border-left: 1px solid #ccc; white-space: nowrap; overflow: hidden; }
.subject { line-height: 17px; padding-left: 5px; }
.props { flex: 1; min-height: 0; display: flex; }
.gutter { width: 8px; background: #dcdcdc; display: flex; flex-direction: column; }
.gutter i { height: 11px; font-style: normal; }
.gutter .box { width: 6px; height: 6px; margin: 3px 1px; border: 1px solid #888; background: #fff; line-height: 4px; font-size: 6px; text-align: center; }
.props ul { flex: 1; }
.props li { height: 11px; line-height: 11px; background: #e3e3e3; }
.props .item { display: flex; align-items: center; background: #f8f8f4; padding-left: 5px; }
.actions { display: flex; justify-content: flex-end; gap: 4px; padding: 3px 5px; }
.actions button { width: 15px; height: 14px; background: #d3e6f8; }
.actions svg { width: 12px; height: 12px; }
.tabs { display: flex; background: #f8f8f8; height: 20px; flex: none; border-top: 1px solid #ccc; padding-bottom: 3px; }
.tabs button { width: 20px; background: #ececec; border: solid #ccc; border-width: 0 1px 1px 0; }
.tabs .active { background: #fff; }
.tabs svg { width: 11px; height: 11px; }

.materials { height: 39px; flex: none; overflow: hidden; margin-left: 2px; background: #f8f8f8; }
.materials .panel-head { height: 14px; }
.submenu { display: flex; align-items: center; gap: 9px; height: 15px; padding-left: 4px; }
.matbar { display: flex; align-items: center; border-top: 1px solid #e6e6e6; padding: 0 4px; height: 16px; }
.matbar button { width: 16px; height: 16px; }
.matbar button svg { width: 14px; height: 14px; }
.matbar .step { width: 11px; }
.matbar .step svg { width: 5px; height: 9px; }
.matbar .off { background: #d4d4d4; }
.matbar .fade svg { filter: grayscale(1); opacity: .6; }
.matbar .sep { width: 7px; }
.struct { width: 131px; margin-right: 1px; }
.basis { width: 178px; margin-left: 6px; }
.matbar .on { margin-left: 6px; }

.badge { position: absolute; left: 0; top: 0; display: flex; height: 66px; }
.arrow { width: 66px; background: #2f76b8; display: flex; align-items: flex-end; justify-content: flex-end; padding: 11px; }
.arrow svg { width: 27px; height: 27px; }
.flag { width: 95px; background: #bababa; display: flex; align-items: center; justify-content: center; }
.flag svg { width: 61px; height: 42px; }
.brand { position: absolute; right: -9px; top: 36px; width: 86px; height: 86px; border-radius: 50%; background: #20266f; color: #fff; display: flex; flex-direction: column; align-items: center; gap: 1px; padding-top: 23px; font-family: "Open Sans", sans-serif; font-size: 13px; font-weight: 700; line-height: 18px; }
.brand svg { width: 44px; height: 23px; }

.banner { height: 128px; flex: none; display: flex; align-items: center; justify-content: space-between; color: #fff; background: linear-gradient(70deg, #1a3380 0%, #182f7a 35%, #0a1655 66%, #0a1655 100%); }
h1 { padding: 2px 0 0 40px; width: 580px; font-family: Lato, sans-serif; font-size: 37px; font-weight: 700; line-height: 45px; }
.category { position: relative; width: 345px; height: 100%; display: flex; align-items: center; gap: 20px; padding-left: 10px; z-index: 0; font-family: Lato, sans-serif; font-size: 29px; font-weight: 900; line-height: 33px; }
.category::before { content: ""; position: absolute; inset: 0; z-index: -1; background: #0f5dd5; clip-path: polygon(63px 0, 100% 0, 100% 100%, 0 100%); }
.category svg { width: 48px; height: 48px; overflow: visible; filter: drop-shadow(0 0 12px #2bbcff); }
.base { height: 18px; flex: none; background: #020b35; }
```

FILE: shape.js
```js
// Contour plot of the buckling mode: 3 x 3 half waves over a slab in oblique projection.
const canvas = document.getElementById("shape");
const ctx = canvas.getContext("2d");
const K = 3;
const ORIGIN = [204.5 - 170, 252 - 68];
const U = [137, 21.6];
const V = [79, -37];
const HEIGHT = 21;
const COLORS = [[0, 0, 168], [0, 0, 255], [0, 144, 255], [0, 255, 255], [0, 230, 140], [0, 255, 0], [255, 255, 0], [208, 200, 0], [255, 160, 0], [255, 0, 0], [184, 0, 0]];
const LOW = new Set(["0,1", "2,1"]);

const project = (s, t, z) => [
  (ORIGIN[0] + U[0] * s + V[0] * t) * K,
  (ORIGIN[1] + U[1] * s + V[1] * t - z) * K,
];
const SLAB = [project(0, 0, 0), project(0, 3, 0), project(3, 3, 0), project(3, 0, 0)];

function fillPoly(points, color) {
  ctx.fillStyle = color;
  ctx.beginPath();
  points.forEach(([x, y]) => ctx.lineTo(x, y));
  ctx.closePath();
  ctx.fill();
}

function drawCell(image, col, row, sign) {
  const amp = LOW.has(`${col},${row}`) ? 0.945 : 1;
  const n = 560;
  for (let j = n; j >= 0; j--) {
    for (let i = 0; i <= n; i++) {
      const v = Math.sin(Math.PI * i / n) * Math.sin(Math.PI * j / n);
      const w = amp * (1.07 * Math.pow(Math.max(0, v), 0.85) - 0.07);
      if (w < 0) continue;
      const c = COLORS[w > 0.994 ? 10 : Math.min(9, Math.floor(w * 10))];
      const p = project(col + i / n, row + j / n, sign * HEIGHT * w);
      const x = Math.round(p[0]), y = Math.round(p[1]);
      for (let d = 0; d < 2; d++) {
        const k = ((y + d) * image.width + x) * 4;
        image.data[k] = c[0];
        image.data[k + 1] = c[1];
        image.data[k + 2] = c[2];
        image.data[k + 3] = 255;
      }
    }
  }
}

function drawCells(sign) {
  const image = ctx.getImageData(0, 0, canvas.width, canvas.height);
  for (let row = 2; row >= 0; row--)
    for (let col = 0; col < 3; col++)
      if (((col + row) % 2 === 0) === (sign < 0)) drawCell(image, col, row, sign);
  ctx.putImageData(image, 0, 0);
}

// Webs of the two beams below the slab.
for (const row of [1, 2]) {
  const top = project(3, row, 0);
  const foot = [top[0], top[1] + 28 * K];
  const back = [top[0] - 50 * K, top[1] + 24 * K];
  fillPoly([top, foot, back], row === 2 ? "#0000c8" : "#464ea6");
  fillPoly([[top[0] - 26 * K, top[1] + 12 * K], [foot[0] - 10 * K, foot[1]], back], row === 2 ? "#1596f4" : "#5588b8");
  ctx.strokeStyle = "#18243c";
  ctx.lineWidth = K;
  ctx.beginPath();
  [top, foot, back].forEach(([x, y]) => ctx.lineTo(x, y));
  ctx.stroke();
}

fillPoly(SLAB, "#0000a8");
drawCells(-1);
fillPoly(SLAB, "rgba(132,132,132,.576)");
drawCells(1);
```
